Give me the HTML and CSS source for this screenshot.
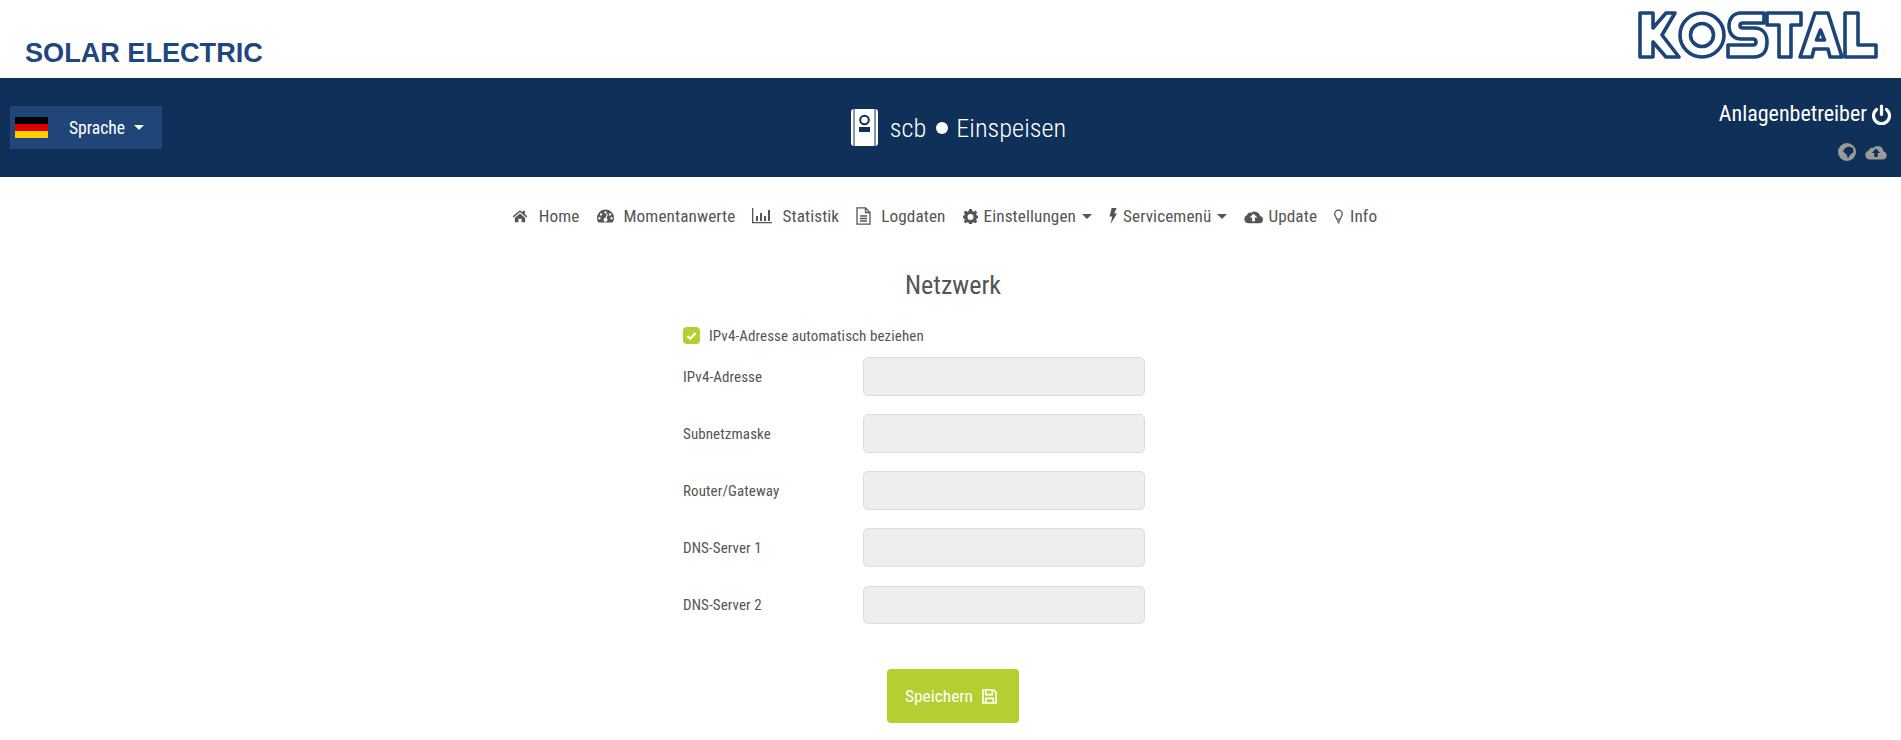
FILE: index.html
```html
<!DOCTYPE html>
<html lang="de">
<head>
<meta charset="utf-8">
<title>Netzwerk</title>
<link rel="stylesheet" href="styles.css">
</head>
<body>
<header class="top">
  <div class="brand">SOLAR ELECTRIC</div>
  <svg class="logo" viewBox="0 0 241 50" role="img" aria-label="KOSTAL" fill="#fff" stroke="#1d4478" stroke-width="3.6" stroke-linejoin="round">
    <path d="M2 3H15V18L28 3H37L24 25L41 47H28L15 32V47H2Z"/>
    <path fill-rule="evenodd" d="M64 3A22 22 0 1 1 64 47A22 22 0 1 1 64 3ZM64 13.500A11.500 11.500 0 1 0 64 36.500A11.500 11.500 0 1 0 64 13.500Z"/>
    <path d="M126 3H103C95 3 91 9 91 16C91 24 96 29 103 29H115C117 29 118 30 118 32C118 34 117 35 115 35H90V47H116C125 47 129 41 129 32C129 23 124 18 116 18H105C103 18 102 17 102 15.500C102 14 103 13 105 13H126Z"/>
    <path d="M129 3H163V15H153V47H141V15H129Z"/>
    <path fill-rule="evenodd" d="M162 47L177 3H190L204 47H192L190 39H176L174 47ZM182.500 20L178.500 30H186.500Z"/>
    <path d="M207 3H220V35H238V47H207Z"/>
  </svg>
</header>
<section class="bar">
  <div class="lang">
    <span class="flag"><i class="f1"></i><i class="f2"></i><i class="f3"></i></span>
    <span class="lang-label">Sprache</span>
    <span class="caret caret-white"></span>
  </div>
  <div class="device">
    <svg class="device-icon" viewBox="0 0 27 37">
      <rect x="0" y="0" width="27" height="37" rx="3" fill="#fff"/>
      <path d="M3 0V37M24 0V37" stroke="#0f3059" stroke-width="1"/>
      <circle cx="13.500" cy="11" r="4.300" fill="none" stroke="#0f3059" stroke-width="2"/>
      <rect x="8" y="18" width="11" height="5" fill="#0f3059"/>
    </svg>
    <span>scb</span>
    <span class="dot"></span>
    <span>Einspeisen</span>
  </div>
  <div class="user">
    <div class="user-name">
      <span>Anlagenbetreiber</span>
      <svg class="power" viewBox="0 0 19 21" fill="none" stroke="#fff" stroke-width="3.200" stroke-linecap="round"><path d="M9.500 2V10.500"/><path d="M4.500 5.500A8 8 0 1 0 14.500 5.500"/></svg>
    </div>
    <div class="status">
      <svg class="globe" viewBox="0 0 18 18"><circle cx="9" cy="9" r="9" fill="#9a9a9a"/><path d="M7 5L11 3.500L15 5L15.500 9L12 12L10 15.500L8.500 11.500L5 8.500Z" fill="#0f3059"/></svg>
      <svg class="cloud" viewBox="0 0 22 16"><path d="M5 15.500A4.500 4.500 0 0 1 3.600 6.700A3.500 3.500 0 0 1 8 4A6 6 0 0 1 18.500 7.600A4 4 0 0 1 17.500 15.500Z" fill="#9a9a9a"/><path d="M11 4.500L15.200 9H12.700V13H9.300V9H6.800Z" fill="#0f3059"/></svg>
    </div>
  </div>
</section>
<nav class="nav">
  <a class="item"><svg class="ic i-home" viewBox="0 0 18 16"><path d="M9 1.500L0.800 8.400L1.800 9.600L9 3.600L16.200 9.600L17.200 8.400L14.500 6.100V2H12V4L9 1.500ZM3.200 10V15H7.200V11H10.800V15H14.800V10L9 5.200Z"/></svg>Home</a>
  <a class="item"><svg class="ic i-gauge" viewBox="0 0 18 16"><path fill-rule="evenodd" d="M9 1A9 9 0 0 0 0 10C0 12 .7 13.800 1.800 15H16.200C17.300 13.800 18 12 18 10A9 9 0 0 0 9 1ZM9 3A1.300 1.300 0 1 1 9 5.600A1.300 1.300 0 1 1 9 3ZM4.300 5A1.300 1.300 0 1 1 4.300 7.600A1.300 1.300 0 1 1 4.300 5ZM13.700 5A1.300 1.300 0 1 1 13.700 7.600A1.300 1.300 0 1 1 13.700 5ZM2.600 9A1.300 1.300 0 1 1 2.600 11.600A1.300 1.300 0 1 1 2.600 9ZM15.400 9A1.300 1.300 0 1 1 15.400 11.600A1.300 1.300 0 1 1 15.400 9ZM10.500 5.500L11.500 5.800L10.200 10.500A2 2 0 1 1 8.800 10.100Z"/></svg>Momentanwerte</a>
  <a class="item"><svg class="ic i-chart" viewBox="0 0 20 16"><path d="M0 0H1.300V14H20V15.300H0ZM4 8H6V13H4ZM8 5H10V13H8ZM12 8H14V13H12ZM16 2H18V13H16Z"/></svg>Statistik</a>
  <a class="item"><svg class="ic i-log line" viewBox="0 0 15 18" stroke-width="1.300"><path d="M1 .8H9.500L14 5.500V17.200H1ZM9.500 .8V5.500H14M4 9H11M4 11.500H11M4 14H11"/></svg>Logdaten</a>
  <a class="item"><svg class="ic i-gear" viewBox="0 0 16 16"><path fill-rule="evenodd" d="M6.600 0H9.400L9.900 2.200L11.400 2.800L13.300 1.600L15.200 3.600L14 5.400L14.600 6.900L16 7.200V9.800L14.600 10.200L14 11.600L15.200 13.400L13.300 15.200L11.400 14L9.900 14.700L9.400 16H6.600L6.100 14.700L4.600 14L2.700 15.200L.8 13.400L2 11.600L1.400 10.200L0 9.800V7.200L1.400 6.900L2 5.400L.8 3.600L2.700 1.600L4.600 2.800L6.100 2.200ZM8 5.200A3.200 3.200 0 1 0 8 11.600A3.200 3.200 0 1 0 8 5.200Z"/></svg>Einstellungen<span class="caret"></span></a>
  <a class="item"><svg class="ic i-bolt" viewBox="0 0 9 18"><path d="M3 0H8.500L6 6.200H9L1.800 18L3.600 9.500H0.500Z"/></svg>Servicemenü<span class="caret"></span></a>
  <a class="item"><svg class="ic i-cloud" viewBox="0 0 20 15"><path fill-rule="evenodd" d="M4.600 14.500A4.400 4.400 0 0 1 3.200 6A3.400 3.400 0 0 1 7.500 3.500A6 6 0 0 1 17 7A3.800 3.800 0 0 1 16.200 14.500ZM10 4.500L5.900 8.600H8.500V12.500H11.500V8.600H14.100Z"/></svg>Update</a>
  <a class="item"><svg class="ic i-bulb line" viewBox="0 0 10 16" stroke-width="1.400"><path d="M3 11C2.700 8.500 .8 7.800 .8 5A4.200 4.200 0 0 1 9.200 5C9.200 7.800 7.300 8.500 7 11ZM3.200 13H6.800M4 15H6"/></svg>Info</a>
</nav>
<main class="form">
  <h1 class="title">Netzwerk</h1>
  <div class="fields">
    <label class="check">
      <span class="box"><svg viewBox="0 0 12 10" fill="none" stroke="#fff" stroke-width="2.400"><path d="M1.500 5L4.700 8L10.500 1.800"/></svg></span>
      IPv4-Adresse automatisch beziehen
    </label>
    <div class="row"><span class="label">IPv4-Adresse</span><span class="input"></span></div>
    <div class="row"><span class="label">Subnetzmaske</span><span class="input"></span></div>
    <div class="row"><span class="label">Router/Gateway</span><span class="input"></span></div>
    <div class="row"><span class="label">DNS-Server 1</span><span class="input"></span></div>
    <div class="row"><span class="label">DNS-Server 2</span><span class="input input-last"></span></div>
  </div>
  <button class="save">Speichern
    <svg class="disk" viewBox="0 0 16 16" fill="none" stroke="#fff" stroke-width="1.700"><path d="M1 1H12.500L15 3.500V15H1Z"/><path d="M4 1.500V6H11V1.500M4 15V10H12V15"/></svg>
  </button>
</main>
</body>
</html>
```
FILE: styles.css
```css
* { box-sizing: border-box; }
html, body { margin: 0; padding: 0; }
body { background: #fff; color: #555; font-family: "Roboto", "Liberation Sans", sans-serif; font-stretch: 75%; height: 740px; overflow: hidden; }
.top { height: 78px; display: flex; justify-content: space-between; padding: 0 22px 0 25px; }
.brand { font: bold 27.1px/1 "Liberation Sans", sans-serif; color: #1f477f; margin-top: 39px; }
.logo { width: 241px; height: 50px; margin-top: 10px; }
.bar { height: 99px; background: #0f3059; display: grid; grid-template-columns: 1fr auto 1fr; align-items: start; color: #fff; }
.lang { justify-self: start; margin: 28px 0 0 10px; width: 152px; height: 43px; background: #1f4579; display: flex; align-items: center; padding-left: 5px; font-size: 17.6px; }
.flag { width: 33px; height: 22px; display: flex; flex-direction: column; margin-right: 21px; }
.flag i { flex: 1; display: block; }
.f1 { background: #000; } .f2 { background: #d00; } .f3 { background: #ffce00; }
.lang-label { margin-right: 9px; }
.caret { display: inline-block; width: 0; height: 0; border-left: 5.5px solid transparent; border-right: 5.5px solid transparent; border-top: 5.5px solid #555; margin-left: 6px; }
.caret-white { border-left-width: 5px; border-right-width: 5px; border-top-width: 5px; border-top-color: #fff; margin-left: 0; }
.device { display: flex; align-items: center; gap: 10px; font-size: 26.3px; font-weight: 300; margin: 27px 0 0 16px; height: 45px; }
.device-icon { width: 27px; height: 37px; margin-right: 2px; }
.dot { width: 12px; height: 12px; background: #fff; border-radius: 50%; margin-right: -2px; }
.user { justify-self: end; padding: 21px 10px 0 0; display: flex; flex-direction: column; align-items: flex-end; }
.user-name { display: flex; align-items: center; gap: 5px; font-size: 22px; line-height: 30px; }
.power { width: 19px; height: 21px; }
.status { display: flex; gap: 9px; align-items: center; margin-top: 14px; padding-right: 4px; }
.globe { width: 18px; height: 18px; }
.cloud { width: 22px; height: 16px; }
.nav { display: flex; justify-content: center; align-items: center; height: 78px; padding-right: 12px; font-size: 17.2px; letter-spacing: .1px; gap: 17px; color: #555; }
.item { display: flex; align-items: center; white-space: nowrap; }
.ic { height: 16px; fill: #555; flex: none; }
.line { fill: none; stroke: #555; }
.i-home { width: 16px; margin-right: 11px; }
.i-gauge { width: 17px; margin-right: 10px; }
.i-chart { width: 20px; margin-right: 10px; }
.i-log { width: 15px; height: 18px; margin-right: 10px; }
.i-gear { width: 15px; height: 15px; margin-right: 6px; }
.i-bolt { width: 8px; height: 18px; margin-right: 6px; }
.i-cloud { width: 19px; height: 15px; margin-right: 5px; }
.i-bulb { width: 9px; height: 15px; margin-right: 7px; }
.form { display: flex; flex-direction: column; align-items: center; padding-left: 5px; }
.title { font-size: 26px; font-weight: 400; margin: 10px 0 0; line-height: 40px; color: #555; }
.fields { width: 462px; margin-top: 22px; align-self: flex-start; margin-left: 678px; }
.check { display: flex; align-items: center; font-size: 15px; height: 17px; letter-spacing: .1px; }
.box { width: 17px; height: 17px; border-radius: 4px; background: #b5ce32; margin-right: 9px; display: flex; align-items: center; justify-content: center; }
.box svg { width: 11px; height: 10px; }
.row { display: flex; align-items: center; margin-top: 18px; font-size: 15px; letter-spacing: .1px; }
.check + .row { margin-top: 13px; }
.row:last-child { margin-top: 19px; }
.label { width: 180px; }
.input { width: 282px; height: 39px; background: #eee; border: 1px solid #ddd; border-radius: 5px; display: block; }
.input-last { height: 38px; }
.save { margin-top: 45px; width: 132px; height: 54px; background: #b5ce32; color: #fff; border: 0; border-radius: 4px; font: inherit; font-size: 17.4px; display: flex; align-items: center; justify-content: center; gap: 9px; padding: 0 4px 0 0; }
.disk { width: 15px; height: 15px; }
```
